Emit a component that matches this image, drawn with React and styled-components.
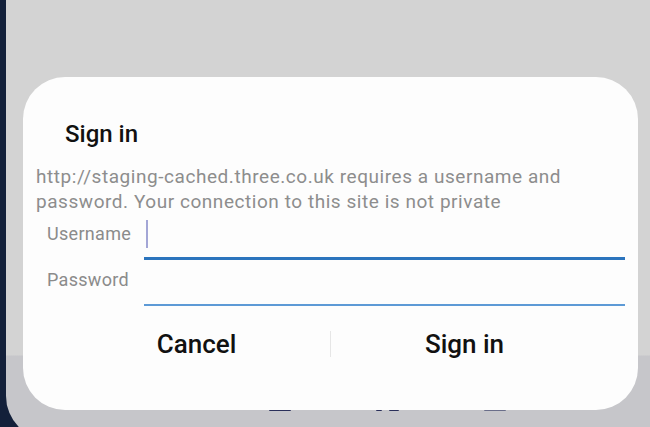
import React from 'react';
import styled, { createGlobalStyle } from 'styled-components';

const GlobalStyle = createGlobalStyle`
  html, body {
    margin: 0;
    padding: 0;
    height: 100%;
    overflow: hidden;
    background: #13203a;
  }
  body {
    font-family: Roboto, "Noto Sans", "Liberation Sans", sans-serif;
  }
`;

const Screen = styled.div`
  position: relative;
  margin-left: 6px;
  height: 440px;
  border-bottom-left-radius: 44px;
  background: linear-gradient(
    to bottom,
    #d3d3d3 0,
    #d3d3d3 355px,
    #c6c6ca 356px,
    #c6c6ca 100%
  );
  padding: 77px 6px 0 17px;
  box-sizing: border-box;
`;

const NavBits = styled.div`
  position: absolute;
  left: 0;
  right: 0;
  top: 409px;
  height: 3px;
`;

const Bit = styled.span`
  position: absolute;
  top: 0;
  height: 2px;
  border-radius: 1px;
  background: ${p => p.$c || '#2a2f5a'};
`;

const Dialog = styled.div`
  position: relative;
  z-index: 1;
  width: 615px;
  height: 333px;
  box-sizing: border-box;
  background: #fdfdfd;
  border-radius: 42px;
  padding: 42px 13px 0 13px;
  display: flex;
  flex-direction: column;
`;

const Title = styled.h1`
  margin: 0 0 15px 29px;
  font-size: 24px;
  line-height: 30px;
  font-weight: 500;
  color: #111;
`;

const Message = styled.p`
  margin: 0;
  padding-right: 30px;
  font-size: 19px;
  line-height: 25px;
  letter-spacing: 0.55px;
  color: #8d8d8d;
`;

const Form = styled.div`
  display: grid;
  grid-template-columns: 97px 1fr;
  padding-left: 11px;
`;

const Label = styled.div`
  font-size: 18px;
  line-height: 40px;
  letter-spacing: 0.3px;
  color: #8b8b8b;
`;

const Field = styled.div`
  position: relative;
  height: ${p => (p.$active ? 43 : 44)}px;
  border-bottom: ${p => (p.$active ? '3px solid #2b74bd' : '2px solid #5d9ad6')};
`;

const Caret = styled.span`
  position: absolute;
  left: 2px;
  top: 6px;
  width: 2px;
  height: 28px;
  background: #a3a6d6;
`;

const Buttons = styled.div`
  display: flex;
  align-items: center;
  margin: 11px 27px 0 27px;
  height: 54px;
`;

const Button = styled.button`
  flex: 1;
  border: none;
  background: none;
  padding: 0;
  font-family: inherit;
  font-size: 26px;
  font-weight: 500;
  color: #111;
  cursor: pointer;
`;

const Divider = styled.span`
  width: 1px;
  height: 26px;
  background: #e6e6e6;
`;

export default function App() {
  return (
    <>
      <GlobalStyle />
      <Screen>
        <NavBits>
          <Bit style={{ left: 263, width: 22 }} />
          <Bit style={{ left: 370, width: 6 }} />
          <Bit style={{ left: 383, width: 10 }} />
          <Bit style={{ left: 478, width: 22 }} $c="#6a6e8a" />
        </NavBits>
        <Dialog>
          <Title>Sign in</Title>
          <Message>
            http://staging-cached.three.co.uk requires a username and password. Your connection to this site is not private
          </Message>
          <Form>
            <Label>Username</Label>
            <Field $active>
              <Caret />
            </Field>
            <Label>Password</Label>
            <Field />
          </Form>
          <Buttons>
            <Button>Cancel</Button>
            <Divider />
            <Button>Sign in</Button>
          </Buttons>
        </Dialog>
      </Screen>
    </>
  );
}
